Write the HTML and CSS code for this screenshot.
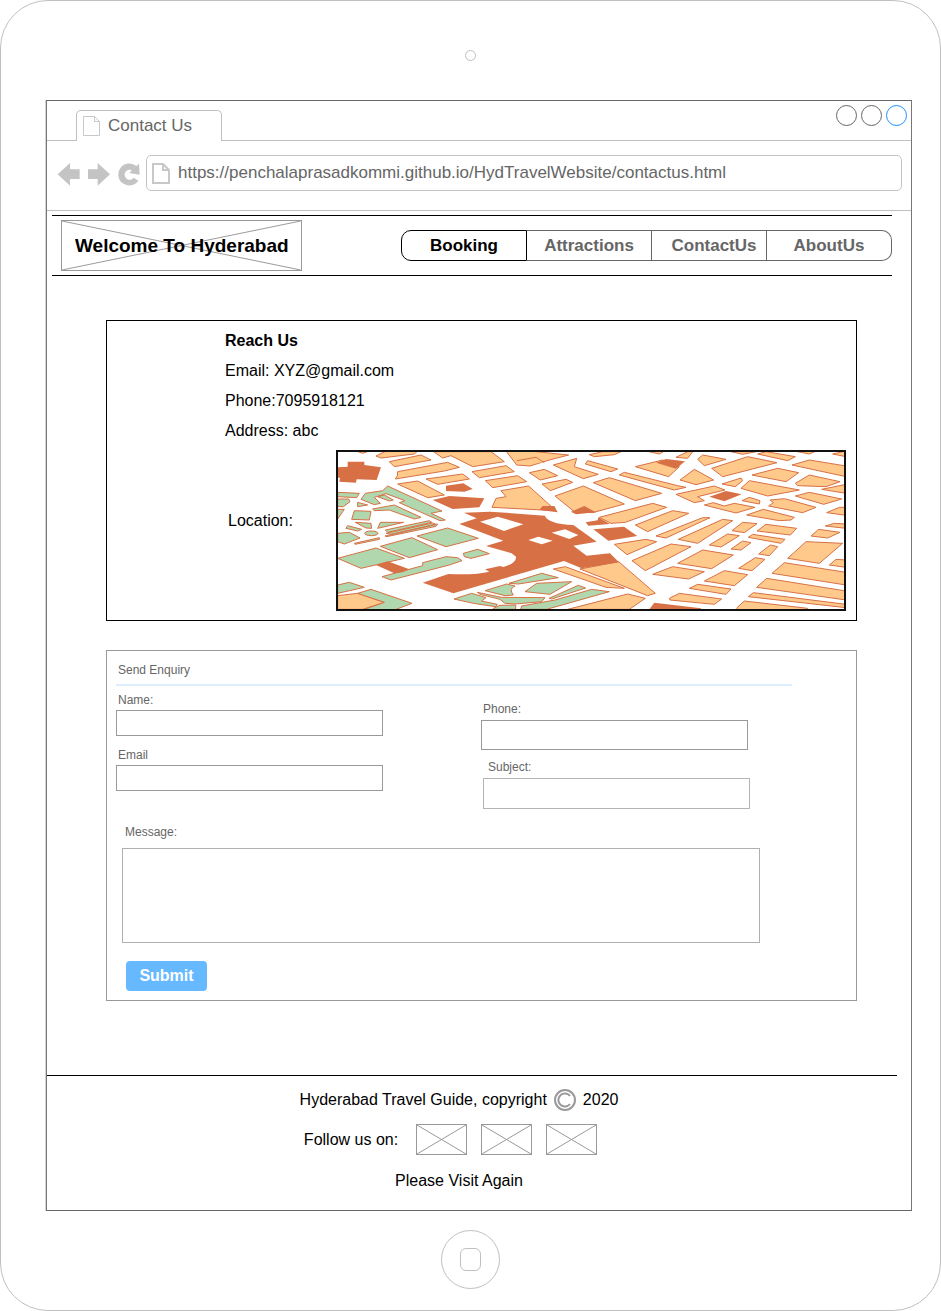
FILE: index.html
```html
<!DOCTYPE html>
<html lang="en">
<head>
<meta charset="utf-8">
<meta name="viewport" content="width=device-width, initial-scale=1">
<title>Contact Us</title>
<link rel="stylesheet" href="styles.css">
</head>
<body>
<div class="device">
  <div class="camera"></div>
  <div class="screen">
    <div class="tabbar">
      <div class="tab">
        <svg class="tab-icon" viewBox="0 0 17 20"><path d="M.5.5h11l5 5v14H.5zM11.500.5v5h5"/></svg>
        <span>Contact Us</span>
      </div>
      <div class="window-controls">
        <button type="button" aria-label="Minimize"></button>
        <button type="button" aria-label="Maximize"></button>
        <button type="button" class="close" aria-label="Close"></button>
      </div>
    </div>
    <div class="toolbar">
      <button type="button" class="tool" aria-label="Back"><svg width="24" height="25" viewBox="51 201 72 75"><path d="M53 238 90 204V223H119V252H90V272z"/></svg></button>
      <button type="button" class="tool" aria-label="Forward"><svg width="24" height="25" viewBox="141 201 72 75"><path d="M210 238 173 204V223H144V252H173V272z"/></svg></button>
      <button type="button" class="tool" aria-label="Reload"><svg width="23" height="25" viewBox="231 201 69 75"><path d="M289 213A33 33 0 1 0 295 257L281 248A15 15 0 1 1 276 226L268 234 299 239 297 206z"/></svg></button>
      <label class="address">
        <svg class="address-icon" viewBox="0 0 18 21"><path d="M1 1h10l6 6v13H1zM11 1v6h6"/></svg>
        <input type="text" aria-label="Address" value="https://penchalaprasadkommi.github.io/HydTravelWebsite/contactus.html">
      </label>
    </div>

    <header class="site-header">
      <div class="logo">
        <svg viewBox="0 0 240 50" preserveAspectRatio="none"><path d="M0 0 240 50M0 50 240 0"/></svg>
        <h1>Welcome To Hyderabad</h1>
      </div>
      <nav class="site-nav">
        <a href="#booking" class="active">Booking</a>
        <a href="#attractions">Attractions</a>
        <a href="#contact" class="contact-link">ContactUs</a>
        <a href="#about">AboutUs</a>
      </nav>
    </header>

    <main>
      <section class="reach">
        <h2>Reach Us</h2>
        <p>Email: XYZ@gmail.com</p>
        <p>Phone:7095918121</p>
        <p>Address: abc</p>
        <div class="location">
          <p>Location:</p>
          <svg class="map" viewBox="6 6 1518 471" preserveAspectRatio="none" role="img" aria-label="Map">
            <g class="land">
              <path d="M120 18 150 3H245L235 12 135 24zM60 3H100L80 10zM160 35 255 15 285 30 175 50zM185 65 335 37 370 52 325 63 178 87 184 78zM465 5 505 35 410 50 345 17 320 24 293 5zM408 65 510 47 535 65 430 83zM448 92 545 77 572 95 470 113zM495 122 578 108 660 182 468 172 480 145 510 140zM270 87 380 72 400 87 305 103zM185 102 245 93 325 135 275 143zM5 437 65 430 145 457 80 478H5z"/>
              <g transform="translate(510)">
                <path d="M0 3 70 3 188 15 130 30 72 48 32 45zM70 68 115 58 155 77 103 90zM108 102 180 88 200 97 133 122zM142 45 212 25 205 50 277 73 232 86zM238 42 245 32 335 57 315 65zM250 14 290 5H345L325 14 265 20zM262 98 310 83 467 130 388 152zM340 75 355 67 515 107 540 112 505 120zM147 138 232 108 355 162 260 188 205 185zM280 202 440 160 482 172 358 217 315 220zM388 50 470 30 520 50 488 80zM388 225 500 182 548 190 425 245zM325 283 420 268 452 275 363 314zM378 332 495 282 555 290 418 362zM450 258 590 203 612 203 480 264zM440 373 500 350 595 365 548 387zM222 357 338 335 448 430 425 437zM142 357 178 350 355 415 300 412zM185 478 365 432 418 445 370 478zM490 445 520 430 647 447 625 463 492 450zM420 3 460 12 475 3z"/>
                <path d="M32 32 90 22 115 38"/>
              </g>
              <g transform="translate(1020)">
                <path d="M0 22 35 5H50L35 25zM65 28 80 15 150 28 85 47zM107 55 215 20 303 38 140 80zM165 5H240L200 13zM245 12 270 5 358 20 335 32zM348 45 400 30 510 48V80zM228 75 305 55 368 68 330 95zM358 100 400 75 492 95 450 110 365 107zM12 90 55 58 113 90 60 104zM138 102 195 84 200 92 178 110zM0 133 115 108 147 120 65 140 85 152 55 158zM195 115 220 92 370 120 275 138zM437 118 510 103V130zM358 138 400 127 497 147 443 163zM198 152 220 142 252 152 250 162zM282 150 325 146 420 172 380 188 278 168 292 158zM85 165 112 158 145 168 175 160 237 172 180 189zM212 195 262 178 355 202 345 210 310 212zM452 188 490 172H510V196zM7 268 140 208 170 212 65 280zM168 242 200 217 243 221 205 248zM243 243 270 223 362 235 343 255zM217 262 230 253 327 268 315 280zM100 285 155 252 190 257 135 291zM165 297 200 273 225 278 195 300zM248 312 283 285 305 290 280 317zM188 355 238 323 267 328 228 362zM5 340 80 300 172 315 107 356zM85 393 145 362 215 374 175 407zM40 415 65 403 165 417 150 433zM335 325 390 275 500 280 430 340zM405 258 428 238 492 247 455 264zM448 228 475 220 510 222V235zM460 345 480 328 510 330V352zM288 370 325 338 510 367V405zM242 412 272 385 510 423V450zM217 440 232 428 510 463V473zM183 473 205 453 395 475V480H183zM470 12 510 3V20zM355 3H420L400 12z"/>
              </g>
            </g>
            <g class="park">
              <path d="M5 127 70 130 62 143 5 140zM5 147 38 147 42 155 22 170H5zM65 157 95 165 65 170zM5 178H25L5 207zM55 182 105 184 100 210 47 208zM75 148 88 130 140 122 155 108 318 183 285 190 328 210 312 212 190 158 207 152 150 131 115 142 133 160 115 164zM125 140 145 135 172 150 160 153zM110 177 175 165 255 202 235 207 160 180 115 182zM30 235 35 227 77 238 65 243zM58 217 105 220 107 235 90 234zM125 235 133 217H203zM5 250 40 247 72 264 25 282 5 275zM55 280 130 263V268L57 283zM148 240 280 212 287 217 155 247zM150 250 290 219 300 223 165 253zM147 258 305 222 300 229 152 260zM243 258 335 234 427 265 330 290zM133 289 228 263 305 299 220 323zM5 325 120 294 205 325 75 355zM138 380 260 347V338L330 320 365 323 378 332 340 345 165 390zM382 310 425 298 460 311 405 325 385 320zM5 405 40 397 85 412 5 430zM65 430 105 418 228 460 175 480H80L145 457z"/>
              <ellipse cx="106" cy="250" rx="20" ry="7"/>
              <path d="M519 400 617 370 667 383 547 402zM567 425 602 400 707 395 642 433zM447 422 512 402 537 408Q517 416 532 435L507 437zM424 427 497 442 627 443 617 455 537 462 507 460 492 448 432 433zM354 447 407 430 450 443 437 453 484 463 479 470 412 460zM639 445 727 406 749 414 647 447zM557 468 657 450 767 418 820 425 632 478H554zM472 475 492 466 539 465V478H472z"/>
            </g>
            <g class="building">
              <path d="M330 107 382 100 410 117 385 125 330 123zM290 150 340 138 445 145 430 172 350 177zM35 35H85V45L135 52 122 90 62 88 60 98 10 95 12 84 5 82V52L35 50zM120 345 155 334 220 358 200 367 175 370z"/>
              <path fill-rule="evenodd" d="M384 188 462 185 627 197Q634 221 712 225L782 275 712 287 752 317 822 310 849 337 737 355 684 333 352 430 260 398 337 372Q422 375 460 365L447 358 492 348 502 351Q542 340 540 320L527 310 450 288 502 272 370 222 422 205zM432 215 504 243 562 223 485 200zM577 270 607 260 650 272 617 283zM647 248 687 238 727 255 700 267z"/>
              <path d="M705 185 745 168 780 187 720 193zM610 180 620 168H655L665 187zM749 217 785 211 787 202 822 222 757 227zM772 238 864 230 904 258 817 272zM960 38 990 27 1047 34 1020 56zM940 478 955 458 1095 475V480zM1120 140 1170 123 1217 133 1165 154z"/>
            </g>
          </svg>
        </div>
      </section>

      <form class="enquiry">
        <h2>Send Enquiry</h2>
        <div class="fields">
          <div class="column">
            <label for="name">Name:</label>
            <input id="name" type="text">
            <label for="email">Email</label>
            <input id="email" type="email">
          </div>
          <div class="column column-right">
            <label for="phone">Phone:</label>
            <input id="phone" type="tel">
            <label for="subject" class="subject-label">Subject:</label>
            <input id="subject" class="subject" type="text">
          </div>
        </div>
        <div class="message">
          <label for="message">Message:</label>
          <textarea id="message"></textarea>
          <button type="submit">Submit</button>
        </div>
      </form>
    </main>

    <footer class="site-footer">
      <p class="copyright">Hyderabad Travel Guide, copyright
        <svg width="22" height="22" viewBox="0 0 22 22"><circle cx="11" cy="11" r="10"/><path d="M16 7A6.500 6.500 0 1 0 16 15"/></svg>
        2020</p>
      <div class="follow">
        <span>Follow us on:</span>
        <a href="#social-1" aria-label="Social link 1"><svg viewBox="0 0 49 29"><path d="M0 0 49 29M0 29 49 0"/></svg></a>
        <a href="#social-2" aria-label="Social link 2"><svg viewBox="0 0 49 29"><path d="M0 0 49 29M0 29 49 0"/></svg></a>
        <a href="#social-3" aria-label="Social link 3"><svg viewBox="0 0 49 29"><path d="M0 0 49 29M0 29 49 0"/></svg></a>
      </div>
      <p>Please Visit Again</p>
    </footer>
  </div>
  <button type="button" class="home" aria-label="Home"><span></span></button>
</div>
</body>
</html>
```
FILE: styles.css
```css
* {
  box-sizing: border-box;
}

body {
  margin: 0;
  background: #fff;
  color: #000;
  font: 16px/20px "Liberation Sans", Arial, sans-serif;
}

h1, h2, p {
  margin: 0;
}

button, input, textarea {
  margin: 0;
  padding: 0;
  background: none;
  border: 0;
  font: inherit;
}

svg {
  display: block;
}

/* Tablet frame */
.device {
  display: flex;
  flex-direction: column;
  align-items: center;
  padding: 49px 28px 21px 45px;
  border: 1px solid #c0c0c0;
  border-radius: 48px;
}

.camera {
  width: 11px;
  height: 11px;
  margin: 0 17px 39px 0;
  border: 1px solid #c0c0c0;
  border-radius: 50%;
}

.screen {
  align-self: stretch;
  border: 1px solid #777;
  border-top-color: #666;
  border-bottom-color: #666;
  box-shadow: -1px 0 #d4d4d4;
}

.home {
  display: flex;
  align-items: center;
  justify-content: center;
  width: 59px;
  height: 59px;
  margin: 19px 17px 0 0;
  border: 1px solid #c0c0c0;
  border-radius: 50%;
}

.home span {
  width: 21px;
  height: 23px;
  border: 1px solid #c0c0c0;
  border-radius: 6px;
}

/* Browser chrome */
.tabbar {
  display: flex;
  justify-content: space-between;
  height: 40px;
  padding: 0 4px 0 29px;
  border-bottom: 1px solid #c0c0c0;
}

.tab {
  display: flex;
  align-items: center;
  gap: 8px;
  width: 146px;
  height: 31px;
  margin-top: 9px;
  padding-left: 6px;
  background: #fff;
  border: 1px solid #c0c0c0;
  border-bottom: 0;
  border-radius: 5px 5px 0 0;
  color: #666;
  font-size: 17px;
}

.tab-icon {
  width: 17px;
  height: 20px;
  fill: none;
  stroke: #c8c8c8;
}

.window-controls {
  display: flex;
  gap: 4px;
  padding-top: 4px;
}

.window-controls button {
  width: 21px;
  height: 21px;
  border: 1px solid #666;
  border-radius: 50%;
}

.window-controls .close {
  border-color: #1e90ff;
}

.toolbar {
  display: flex;
  align-items: flex-start;
  gap: 6px;
  height: 70px;
  padding: 14px 9px 0 10px;
  border-bottom: 1px solid #c0c0c0;
}

.tool {
  padding-top: 7px;
  fill: #c4c4c4;
}

.address {
  display: flex;
  flex: 1;
  align-items: center;
  gap: 8px;
  height: 36px;
  padding: 0 5px;
  border: 1px solid #c4c4c4;
  border-radius: 5px;
}

.address-icon {
  width: 18px;
  height: 21px;
  fill: none;
  stroke: #c8c8c8;
  stroke-width: 2;
}

.address input {
  flex: 1;
  min-width: 0;
  color: #666;
  font-size: 17px;
}

/* Site header */
.site-header {
  display: flex;
  align-items: center;
  justify-content: space-between;
  height: 61px;
  margin: 4px 19px 0 5px;
  padding-left: 9px;
  border: solid #000;
  border-width: 1px 0;
}

.logo {
  display: grid;
  align-items: center;
  height: 51px;
  border: 1px solid #999;
}

.logo > * {
  grid-area: 1 / 1;
}

.logo svg {
  width: 100%;
  height: 49px;
  stroke: #999;
}

.logo h1 {
  padding: 0 12px 0 13px;
  font-size: 19px;
}

.site-nav {
  display: grid;
  grid-template-columns: 126fr 125fr 115fr 125fr;
  flex: 0 1 491px;
  height: 31px;
}

.site-nav a {
  border: 1px solid #666;
  border-left: 0;
  color: #666;
  font-size: 17px;
  font-weight: bold;
  line-height: 29px;
  text-align: center;
  text-decoration: none;
}

.site-nav .active {
  border: 1px solid #000;
  border-radius: 10px 0 0 10px;
  color: #000;
}

.site-nav .contact-link {
  padding-left: 10px;
}

.site-nav a:last-child {
  border-radius: 0 10px 10px 0;
}

/* Contact details */
main {
  display: grid;
  gap: 29px;
  margin: 44px 54px 74px 59px;
}

.reach {
  padding: 5px 10px 9px 118px;
  border: 1px solid #000;
}

.reach h2,
.reach > p {
  font-size: 16px;
  line-height: 30px;
}

.location {
  display: grid;
  grid-template-columns: 111px 1fr;
  margin-top: 4px;
}

.location p {
  padding: 61px 0 0 3px;
}

.map {
  width: 100%;
  height: 161px;
  background: #fff;
  border: 2px solid #111;
}

.map path,
.map ellipse {
  stroke: #d77145;
  stroke-width: 3;
}

.land {
  fill: #ffc98c;
}

.park {
  fill: #b0d7ad;
}

.building {
  fill: #d77145;
}

.map .building path {
  stroke-width: 0;
}

/* Enquiry form */
.enquiry {
  padding: 0 0 9px 9px;
  border: 1px solid #999;
  color: #666;
  font-size: 12px;
  line-height: 14px;
}

.enquiry h2 {
  margin-right: 64px;
  padding: 5px 2px 0;
  border-bottom: 2px solid #ddeeff;
  font-size: 12px;
  font-weight: normal;
  line-height: 28px;
}

.fields {
  display: grid;
  grid-template-columns: 267fr 269fr;
  column-gap: 98px;
  margin-right: 106px;
}

.column {
  display: flex;
  flex-direction: column;
  padding-top: 7px;
}

.column-right {
  padding-top: 16px;
}

.column label {
  padding-left: 2px;
}

.column input {
  height: 26px;
  margin: 3px 0 12px;
  border: 1px solid #999;
}

.column-right input {
  height: 30px;
  margin: 4px 2px 10px 0;
}

.column .subject-label {
  padding-left: 7px;
}

.column .subject {
  height: 31px;
  margin: 4px 0 0 2px;
  border-color: #b4b4b4;
}

.message {
  display: flex;
  flex-direction: column;
  align-items: flex-start;
  margin: 16px 96px 0 6px;
}

.message label {
  padding-left: 3px;
}

.message textarea {
  width: 100%;
  height: 95px;
  margin: 9px 0 18px;
  border: 1px solid #b0b0b0;
  resize: none;
}

.message button {
  width: 81px;
  height: 30px;
  margin-left: 4px;
  background: #66b8ff;
  border-radius: 4px;
  color: #fff;
  font-size: 16px;
  font-weight: bold;
}

/* Footer */
.site-footer {
  display: flex;
  flex-direction: column;
  align-items: center;
  height: 135px;
  margin-right: 14px;
  padding: 13px 26px 0 0;
  border-top: 1px solid #000;
}

.copyright {
  display: flex;
  align-items: center;
  gap: 7px;
  height: 22px;
}

.copyright svg {
  fill: none;
  stroke: #999;
  stroke-width: 2;
}

.follow {
  display: flex;
  align-items: center;
  gap: 14px;
  margin: 13px 17px 16px 0;
}

.follow span {
  margin-right: 4px;
}

.follow a {
  width: 51px;
  border: 1px solid #999;
}

.follow svg {
  fill: none;
  stroke: #999;
}
```
